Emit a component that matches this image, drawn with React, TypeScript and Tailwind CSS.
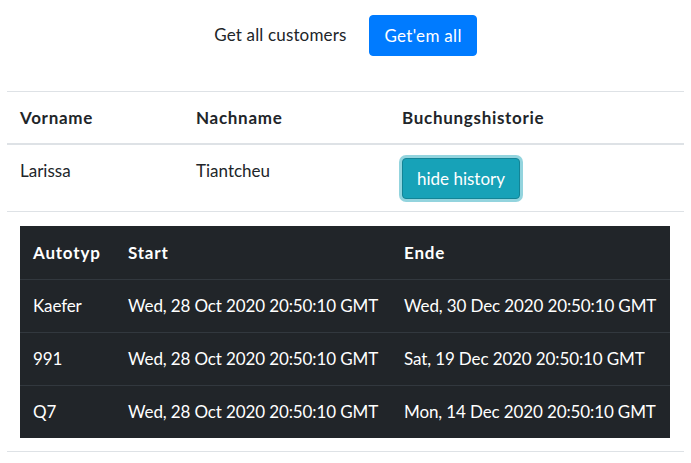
export default function App() {
  const rows = [
    ["Kaefer", "Wed, 28 Oct 2020 20:50:10 GMT", "Wed, 30 Dec 2020 20:50:10 GMT"],
    ["991", "Wed, 28 Oct 2020 20:50:10 GMT", "Sat, 19 Dec 2020 20:50:10 GMT"],
    ["Q7", "Wed, 28 Oct 2020 20:50:10 GMT", "Mon, 14 Dec 2020 20:50:10 GMT"],
  ];
  return (
    <div className="w-[691px] h-[463px] bg-white text-[#212529] font-['Lato',sans-serif] text-[17px] leading-[27px] overflow-hidden">
      <div className="flex justify-center items-center gap-[23px] pt-[15px]">
        <span className="mt-[-3px] tracking-[0.15px]">Get all customers</span>
        <button className="h-[41px] px-[14px] rounded-[4px] bg-[#007bff] text-white border border-[#007bff] tracking-[0.3px]">
          Get'em all
        </button>
      </div>
      <table className="mt-[35px] ml-[7px] w-[677px] border-collapse table-fixed">
        <colgroup>
          <col className="w-[177px]" />
          <col className="w-[206px]" />
          <col className="w-[294px]" />
        </colgroup>
        <thead>
          <tr className="border-t border-[#dee2e6] border-b-2">
            <th className="text-left font-bold tracking-[0.7px] pl-[13px] pr-[12px] pt-[12px] pb-[12px] align-top">Vorname</th>
            <th className="text-left font-bold tracking-[0.7px] px-[12px] pt-[12px] pb-[12px] align-top">Nachname</th>
            <th className="text-left font-bold tracking-[0.7px] px-[12px] pt-[12px] pb-[12px] align-top">Buchungshistorie</th>
          </tr>
        </thead>
        <tbody>
          <tr className="border-b border-[#dee2e6]">
            <td className="pl-[13px] pr-[12px] pt-[12px] align-top">Larissa</td>
            <td className="px-[12px] pt-[12px] align-top">Tiantcheu</td>
            <td className="px-[12px] pt-[13px] pb-[12px] align-top">
              <button className="h-[41px] px-[14px] rounded-[4px] bg-[#17a2b8] text-white border border-[#138496] shadow-[0_0_0_3px_rgba(58,176,195,0.55)]">
                hide history
              </button>
            </td>
          </tr>
          <tr className="border-b border-[#dee2e6]">
            <td colSpan={3} className="pl-[13px] pr-[14px] pt-[14px] pb-[13px]">
              <table className="w-[650px] border-collapse table-fixed bg-[#212529] text-white">
                <colgroup>
                  <col className="w-[96px]" />
                  <col className="w-[276px]" />
                  <col className="w-[278px]" />
                </colgroup>
                <thead>
                  <tr className="h-[53px] border-b border-[#32383e]">
                    <th className="text-left font-bold tracking-[0.8px] pl-[13px] align-middle">Autotyp</th>
                    <th className="text-left font-bold tracking-[0.8px] pl-[12px] align-middle">Start</th>
                    <th className="text-left font-bold tracking-[0.8px] pl-[12px] align-middle">Ende</th>
                  </tr>
                </thead>
                <tbody>
                  {rows.map((r, i) => (
                    <tr key={i} className={"h-[53px] " + (i < 2 ? "border-b border-[#32383e]" : "")}>
                      <td className="pl-[13px] align-middle whitespace-nowrap tracking-[-0.12px]">{r[0]}</td>
                      <td className="pl-[12px] align-middle whitespace-nowrap tracking-[-0.12px]">{r[1]}</td>
                      <td className="pl-[12px] align-middle whitespace-nowrap tracking-[-0.12px]">{r[2]}</td>
                    </tr>
                  ))}
                </tbody>
              </table>
            </td>
          </tr>
        </tbody>
      </table>
    </div>
  );
}
